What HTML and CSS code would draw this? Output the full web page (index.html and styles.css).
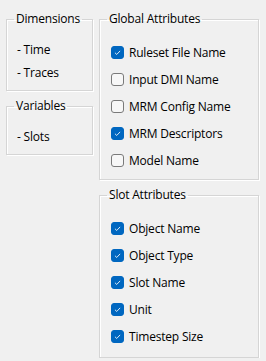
FILE: index.html
```html
<!DOCTYPE html>
<html lang="en">
  <head>
    <meta charset="UTF-8" />
    <title>Export Options</title>
    <link rel="stylesheet" href="styles.css">
  </head>
  <body>
    <div class="panel">
      <div class="left-col">
        <fieldset class="group">
          <legend>Dimensions</legend>
          <div class="item">- Time</div>
          <div class="item">- Traces</div>
        </fieldset>
        <fieldset class="group">
          <legend>Variables</legend>
          <div class="item">- Slots</div>
        </fieldset>
      </div>
      <div class="right-col">
        <fieldset class="group">
          <legend>Global Attributes</legend>
          <label class="check"><span class="box on"><svg viewBox="0 0 13 13"><path d="M3.5 6.8 L5.6 8.8 L9.6 4.6" /></svg></span>Ruleset File Name</label>
          <label class="check"><span class="box"></span>Input DMI Name</label>
          <label class="check"><span class="box"></span>MRM Config Name</label>
          <label class="check"><span class="box on"><svg viewBox="0 0 13 13"><path d="M3.5 6.8 L5.6 8.8 L9.6 4.6" /></svg></span>MRM Descriptors</label>
          <label class="check"><span class="box"></span>Model Name</label>
        </fieldset>
        <fieldset class="group slots">
          <legend>Slot Attributes</legend>
          <label class="check"><span class="box on"><svg viewBox="0 0 13 13"><path d="M3.5 6.8 L5.6 8.8 L9.6 4.6" /></svg></span>Object Name</label>
          <label class="check"><span class="box on"><svg viewBox="0 0 13 13"><path d="M3.5 6.8 L5.6 8.8 L9.6 4.6" /></svg></span>Object Type</label>
          <label class="check"><span class="box on"><svg viewBox="0 0 13 13"><path d="M3.5 6.8 L5.6 8.8 L9.6 4.6" /></svg></span>Slot Name</label>
          <label class="check"><span class="box on"><svg viewBox="0 0 13 13"><path d="M3.5 6.8 L5.6 8.8 L9.6 4.6" /></svg></span>Unit</label>
          <label class="check"><span class="box on"><svg viewBox="0 0 13 13"><path d="M3.5 6.8 L5.6 8.8 L9.6 4.6" /></svg></span>Timestep Size</label>
        </fieldset>
      </div>
    </div>
  </body>
</html>
```

FILE: styles.css
```css
* {
  margin: 0;
  padding: 0;
  box-sizing: border-box;
}
html,
body {
  background-color: #f0f0f0;
}
body {
  padding: 11px 0 0 6px;
  font-family: "Open Sans", "Noto Sans", sans-serif;
  font-size: 12px;
  letter-spacing: -0.2px;
  color: #000;
}
.panel {
  display: flex;
  gap: 6px;
  align-items: flex-start;
}
.left-col {
  width: 87px;
  display: flex;
  flex-direction: column;
  gap: 7px;
}
.right-col {
  width: 160px;
  display: flex;
  flex-direction: column;
  gap: 7px;
}
.group {
  border: 1px solid #d5d5d5;
  box-shadow: inset 1px 1px 0 #fff, 1px 1px 0 #fff;
  padding: 0 6px 6px 7px;
  min-width: 0;
}
.group legend {
  padding: 0 2px;
  line-height: 16px;
}
.left-col .group {
  padding-top: 11px;
}
.right-col .group {
  padding-top: 12px;
  padding-bottom: 5px;
}
.right-col .group.slots {
  padding-bottom: 7px;
}
.item {
  height: 23px;
  line-height: 23px;
  padding-left: 3px;
}
.check {
  display: flex;
  align-items: center;
  height: 27px;
  padding-left: 4px;
}
.box {
  width: 13px;
  height: 13px;
  margin-right: 5px;
  border: 1px solid #7a7a7a;
  border-radius: 3px;
  background-color: #f7f7f7;
  flex-shrink: 0;
}
.box.on {
  border-color: #0067c0;
  background-color: #0067c0;
}
.box svg {
  display: block;
  width: 11px;
  height: 11px;
}
.box svg path {
  fill: none;
  stroke: #fff;
  stroke-width: 1;
}
```
